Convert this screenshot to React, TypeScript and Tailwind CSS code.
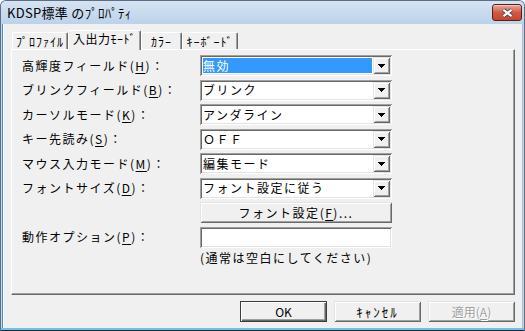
const sunken =
  "shadow-[inset_1px_1px_0_#a0a0a0,inset_-1px_-1px_0_#ffffff,inset_2px_2px_0_#696969,inset_-2px_-2px_0_#e3e3e3]";
const raised =
  "shadow-[inset_1px_1px_0_#e3e3e3,inset_-1px_-1px_0_#696969,inset_2px_2px_0_#ffffff,inset_-2px_-2px_0_#a0a0a0]";

type Row = {
  label: string;
  k: string;
  value: string;
  selected?: boolean;
};

const rows: Row[] = [
  { label: "高輝度フィールド", k: "H", value: "無効", selected: true },
  { label: "ブリンクフィールド", k: "B", value: "ブリンク" },
  { label: "カーソルモード", k: "K", value: "アンダライン" },
  { label: "キー先読み", k: "S", value: "ＯＦＦ" },
  { label: "マウス入力モード", k: "M", value: "編集モード" },
  { label: "フォントサイズ", k: "D", value: "フォント設定に従う" },
];

const DropArrow = () => (
  <svg width="7" height="4" viewBox="0 0 7 4" shapeRendering="crispEdges">
    <rect x="0" y="0" width="7" height="1" fill="#000" />
    <rect x="1" y="1" width="5" height="1" fill="#000" />
    <rect x="2" y="2" width="3" height="1" fill="#000" />
    <rect x="3" y="3" width="1" height="1" fill="#000" />
  </svg>
);

const Mn = ({ text, k, after = "" }: { text: string; k: string; after?: string }) => (
  <>
    {text}(<span className="underline underline-offset-[2px]">{k}</span>){after}
  </>
);

const Combo = ({ value, selected }: { value: string; selected?: boolean }) => (
  <div className={`w-[192px] h-[21px] bg-white p-[2px] flex ${sunken}`}>
    <div className="flex-1 p-px flex">
      <div
        className={`flex-1 flex items-center ${
          selected ? "bg-[#3399ff] text-white" : "text-black"
        }`}
      >
        {value}
      </div>
    </div>
    <div
      className={`w-[17px] h-full bg-[#f0f0f0] flex items-center justify-center ${raised}`}
    >
      <DropArrow />
    </div>
  </div>
);

const Tab = ({ w, children }: { w: string; children: React.ReactNode }) => (
  <div
    className={`${w} h-[17px] pt-px flex items-center justify-center rounded-t-[2px] border-l border-t border-r border-l-white border-t-white border-r-[#696969] shadow-[inset_-1px_0_0_#a0a0a0] text-[12px] tracking-[1px]`}
  >
    {children}
  </div>
);

const CloseButton = () => (
  <div className="w-[30px] h-[17px] rounded-[3px] border border-[#5b1e16] bg-linear-to-b from-[#e8a99b] via-[#cf5a45] to-[#c8452f] flex items-center justify-center shadow-[inset_0_1px_0_#f2c8bf]">
    <svg width="13" height="10" viewBox="0 0 13 10">
      <path d="M2.5 1.8 L10.5 8.2 M10.5 1.8 L2.5 8.2" stroke="#444" strokeWidth="4" />
      <path d="M2.5 1.8 L10.5 8.2 M10.5 1.8 L2.5 8.2" stroke="#fff" strokeWidth="2.2" />
    </svg>
  </div>
);

export default function App() {
  return (
    <div className="w-[525px] h-[331px] flex flex-col overflow-hidden rounded-t-[6px] border-x border-t border-[#5d6f85] bg-[#c4d6ea] font-['Noto_Sans_CJK_JP',sans-serif] text-[12px] leading-[14px] text-black">
      {/* title bar */}
      <div className="h-[23px] flex items-center justify-between pl-[6px] pr-[2px] bg-linear-to-b from-[#d6e3f2] to-[#bcd2ea]">
        <span className="text-[13px] tracking-[0.3px] text-black">KDSP標準 のﾌﾟﾛﾊﾟﾃｨ</span>
        <div className="self-start mt-[3px]">
          <CloseButton />
        </div>
      </div>

      {/* client */}
      <div className="h-[304px] ml-[1px] mr-[1px] border-l border-l-[#4a8fd0] flex">
        <div className="flex-1 bg-[#f0f0f0] border-l border-l-white flex flex-col">
          {/* tabs */}
          <div className="h-[25px] pt-[6px] flex items-end pl-[8px]">
            <Tab w="w-[56px]">ﾌﾟﾛﾌｧｲﾙ</Tab>
            <div className="relative z-10 -mb-px w-[73px] h-[20px] pb-[4px] flex items-center justify-center bg-[#f0f0f0] rounded-t-[2px] border-l border-t border-r border-l-white border-t-white border-r-[#696969] shadow-[inset_-1px_0_0_#a0a0a0] tracking-[0.5px]">
              入出力ﾓｰﾄﾞ
            </div>
            <Tab w="w-[41px]">ｶﾗｰ</Tab>
            <Tab w="w-[56px]">ｷｰﾎﾞｰﾄﾞ</Tab>
          </div>

          {/* panel */}
          <div className="ml-[7px] w-[504px] h-[246px] border border-l-white border-t-white border-r-[#696969] border-b-[#696969] shadow-[inset_-1px_-1px_0_#a0a0a0] pl-[10px] pt-[5px] flex flex-col gap-[3.5px] tracking-[1.5px]">
            {rows.map((r) => (
              <div key={r.k} className="h-[21px] flex items-center">
                <div className="w-[178px]">
                  <Mn text={r.label} k={r.k} after="：" />
                </div>
                <Combo value={r.value} selected={r.selected} />
              </div>
            ))}
            <div className="h-[21px] flex items-center">
              <div className="w-[178px]" />
              <div
                className={`w-[192px] h-[21px] bg-[#f0f0f0] flex items-center justify-center ${raised}`}
              >
                <Mn text="フォント設定" k="F" after="..." />
              </div>
            </div>
            <div className="h-[21px] flex items-center">
              <div className="w-[178px]">
                <Mn text="動作オプション" k="P" after="：" />
              </div>
              <div className={`w-[192px] h-[21px] bg-white ${sunken}`} />
            </div>
            <div className="h-[14px] flex items-center">
              <div className="w-[178px]" />
              <span>(通常は空白にしてください)</span>
            </div>
          </div>

          {/* buttons */}
          <div className="mt-[6px] flex justify-end gap-[7px] pr-[7px]">
            <div className="w-[87px] h-[21px] border border-[#3c3c3c] bg-[#f0f0f0] flex items-center justify-center shadow-[inset_1px_1px_0_#ffffff,inset_-1px_-1px_0_#696969,inset_-2px_-2px_0_#a0a0a0]">
              OK
            </div>
            <div
              className={`w-[87px] h-[21px] bg-[#f0f0f0] flex items-center justify-center text-[13px] tracking-[2px] ${raised}`}
            >
              ｷｬﾝｾﾙ
            </div>
            <div
              className={`w-[87px] h-[21px] bg-[#f0f0f0] flex items-center justify-center text-[#a0a0a0] [text-shadow:1px_1px_0_#ffffff] ${raised}`}
            >
              <Mn text="適用" k="A" />
            </div>
          </div>
        </div>
        <div className="w-[1px] bg-[#a9bcd2]" />
      </div>

      {/* bottom frame */}
      <div className="h-[3px] border-t-2 border-t-[#6cc4ea] bg-[#1f2a36]" />
    </div>
  );
}
